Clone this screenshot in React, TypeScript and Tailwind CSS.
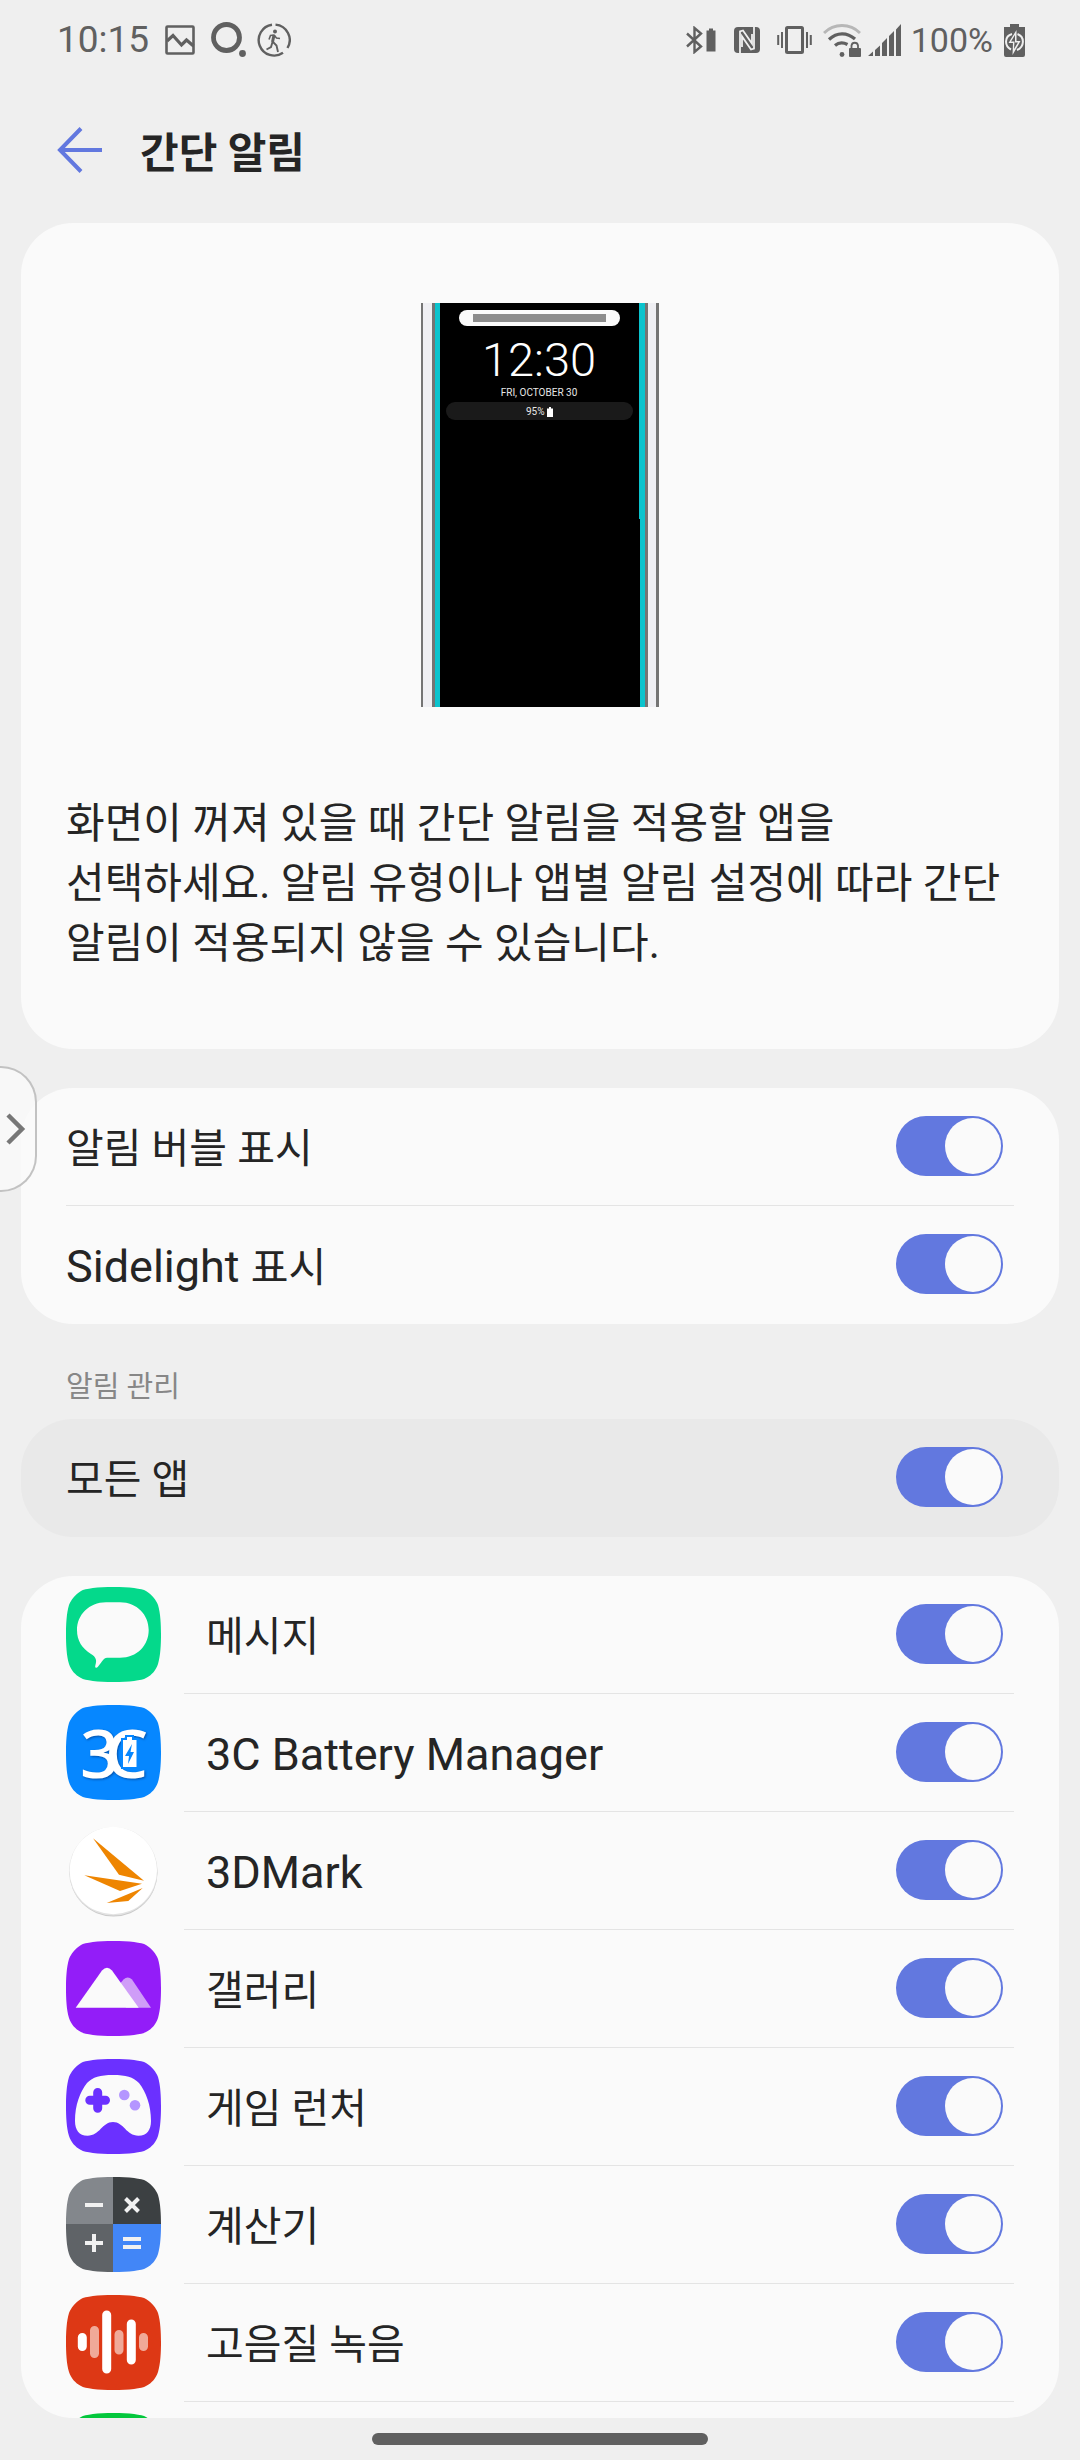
import { useState } from "react";
import type { ReactNode } from "react";

const SQUIRCLE =
  "M47.5 0C63 0 76 1.5 80 4C86 7.5 90 13 92 18C94.5 26 95 38 95 47.5C95 57 94.5 69 92 77C90 83 86 88 80 91C76 93.5 63 95 47.5 95C32 95 19 93.5 15 91C9 88 5 83 3 77C.5 69 0 57 0 47.5C0 38 .5 26 3 18C5 13 9 7.5 15 4C19 1.5 32 0 47.5 0Z";

const AppIcon = ({ color, children }: { color?: string; children?: ReactNode }) => (
  <svg viewBox="0 0 95 95" className="size-[95px] shrink-0" aria-hidden="true">
    {color && <path d={SQUIRCLE} fill={color} />}
    {children}
  </svg>
);

const MessageIcon = () => (
  <AppIcon color="#04d98b">
    <path
      d="M40 15.3H54C71 15.3 82.7 28 82.7 43C82.7 58.5 71 70.7 54 70.7H41C38 70.7 36.5 74 34 77C32 79.5 31 81.5 29.5 80.5C28.5 79.5 30.5 76 30 73C29.5 70 27 68 25 67C16 61 11 54 11 43C11 28 23 15.3 40 15.3Z"
      fill="#fafafa"
    />
  </AppIcon>
);

const BatteryManagerIcon = () => (
  <AppIcon color="#0687ff">
    <text
      x="14 39"
      y="73"
      fontFamily="'Noto Sans', sans-serif"
      fontSize="68"
      fontWeight="500"
      fill="#fff"
      className="drop-shadow-[1px_1px_1px_#0450a8]"
    >
      3C
    </text>
    <path d="M56 34H60V31H67V34H71.5V63H56Z" fill="#fff" stroke="#0687ff" strokeWidth="2" />
    <path d="M66 39L59 51H63L62 59L68 47H64.5Z" fill="#0687ff" />
  </AppIcon>
);

const ThreeDMarkIcon = () => (
  <AppIcon>
    <circle cx="47.5" cy="49.5" r="44" fill="#c9c9c9" />
    <circle cx="47.3" cy="48.3" r="44.3" fill="#e2e2e2" />
    <circle cx="47.3" cy="47.5" r="43.7" fill="#fff" />
    <g fill="#ee8501">
      <path d="M27 15.3L78 57.7L53 51.7Z" />
      <path d="M18.3 52.3L76 60.7L54 68Z" />
      <path d="M76.7 65L62.3 78L40.7 80Z" />
    </g>
  </AppIcon>
);

const GalleryIcon = () => (
  <AppIcon color="#931df8">
    <path d="M52 45L57.5 38.5Q61.7 34.5 66 38.5L85 66.7H60Z" fill="#cf9df8" />
    <path d="M9.7 66.7L36 29.5Q41 24 46 29.5L72.7 66.7Z" fill="#fafafa" />
  </AppIcon>
);

const GameIcon = () => (
  <AppIcon color="#6b30ff">
    <path
      d="M47 16C60 16 67 18 73 24C80 33 85 46 85 62C85 71 81 76.7 72.5 76.7C60 76.7 58 63 47 63C36 63 34 76.7 21.5 76.7C13 76.7 9 71 9 62C9 46 14 33 21 24C27 18 34 16 47 16Z"
      fill="#fafafa"
    />
    <path
      d="M31.7 33.5V49.2M23.8 41.3H39.5"
      stroke="#6b30ff"
      strokeWidth="9"
      strokeLinecap="round"
    />
    <circle cx="58.3" cy="36" r="5.3" fill="#b496ff" />
    <circle cx="69" cy="46.3" r="5.3" fill="#b496ff" />
  </AppIcon>
);

const CalculatorIcon = () => (
  <AppIcon>
    <clipPath id="calc">
      <path d={SQUIRCLE} />
    </clipPath>
    <g clipPath="url(#calc)">
      <rect width="47" height="47" fill="#83878c" />
      <rect x="47" width="48" height="47" fill="#3c4042" />
      <rect y="47" width="47" height="48" fill="#5f6367" />
      <rect x="47" y="47" width="48" height="48" fill="#4286f7" />
    </g>
    <path
      d="M19 28H37M19 66H37M28 57V75M57 62H75M57 70H75M59.5 21.5L72.5 34.5M72.5 21.5L59.5 34.5"
      stroke="#f1f1f1"
      strokeWidth="4"
    />
  </AppIcon>
);

const RecorderIcon = () => (
  <AppIcon color="#dd3815">
    <g strokeWidth="9" strokeLinecap="round">
      <path d="M16.3 42.5V51.5M40.7 20V74M65.3 29V65" stroke="#fff" />
      <path d="M28.5 35.5V58.5M53 39.5V55M77.5 42.5V51.5" stroke="#f0a998" />
    </g>
  </AppIcon>
);

const Latin = ({ children }: { children: ReactNode }) => (
  <span className="text-[45px]">{children}</span>
);

const apps = [
  { id: "messages", name: "메시지", icon: <MessageIcon /> },
  { id: "battery", name: <Latin>3C Battery Manager</Latin>, icon: <BatteryManagerIcon /> },
  { id: "3dmark", name: <Latin>3DMark</Latin>, icon: <ThreeDMarkIcon /> },
  { id: "gallery", name: "갤러리", icon: <GalleryIcon /> },
  { id: "game", name: "게임 런처", icon: <GameIcon /> },
  { id: "calculator", name: "계산기", icon: <CalculatorIcon /> },
  { id: "recorder", name: "고음질 녹음", icon: <RecorderIcon /> },
];

const Switch = ({ id }: { id: string }) => {
  const [on, setOn] = useState(true);
  return (
    <input
      id={id}
      type="checkbox"
      role="switch"
      checked={on}
      onChange={() => setOn(!on)}
      className="mr-[11px] flex h-[60px] w-[107px] shrink-0 cursor-pointer appearance-none rounded-full bg-gray-400 p-[2px] before:size-[56px] before:rounded-full before:bg-[#fafafa] checked:justify-end checked:bg-[#6278df]"
    />
  );
};

const SettingRow = ({ id, label, line }: { id: string; label: ReactNode; line?: boolean }) => (
  <div
    className={`flex h-[118px] items-center justify-between border-b pb-px ${line ? "border-[#e4e4e4]" : "border-transparent"}`}
  >
    <label htmlFor={id} className="pt-[6px]">
      {label}
    </label>
    <Switch id={id} />
  </div>
);

const StatusBar = () => (
  <div className="flex h-20 shrink-0 items-center justify-between pr-[55px] pl-[57px] text-[#606060]">
    <div className="flex items-center">
      <span className="text-[37px] leading-[40px]">10:15</span>
      <svg viewBox="0 0 30 30" className="ml-4 size-[30px]" fill="none" stroke="currentColor">
        <rect x="1.5" y="1.5" width="27" height="27" rx="1" strokeWidth="2.6" />
        <path d="M2 16L8 10.5L16.5 20L21.500 15L28.500 21" strokeWidth="3.2" />
      </svg>
      <svg viewBox="0 0 36 36" className="ml-4 size-[36px]" fill="none">
        <circle cx="15.5" cy="15.5" r="13" stroke="currentColor" strokeWidth="4.8" />
        <circle cx="31.5" cy="31.5" r="3.4" fill="currentColor" />
      </svg>
      <svg viewBox="0 0 34 34" className="ml-[10px] size-[34px]" fill="none" stroke="currentColor">
        <path
          d="M18.5 1.600A15.500 15.500 0 0 1 30.500 25M26 29.800A15.500 15.500 0 1 1 15 1.700"
          strokeWidth="2.4"
        />
        <circle cx="18" cy="8.5" r="2" fill="currentColor" stroke="none" />
        <path d="M12 16.5L13.5 12.5L17 12L19.5 15L23 15.5" strokeWidth="1.6" />
        <path d="M17 12L15.5 19" strokeWidth="3" />
        <path d="M15.5 18.5L19.5 22.5L21 29M15.5 19L14 24L9.5 26.5" strokeWidth="1.9" />
      </svg>
    </div>

    <div className="flex items-center">
      <svg viewBox="0 0 30 28" className="h-[28px] w-[30px]" fill="none">
        <path
          d="M1 7.5L15 20.5L8.5 26V2L15 7.5L1 20.5"
          stroke="currentColor"
          strokeWidth="2.4"
        />
        <path d="M20.5 4.5H23V2.5H27V4.5H29.5V25.5H20.5Z" fill="currentColor" />
      </svg>
      <svg viewBox="0 0 26 26" className="ml-[18px] size-[26px]">
        <rect width="26" height="26" rx="4" fill="currentColor" />
        <path
          d="M6 26V4.5L9 3.5L18 16.5V7M20 0V21.5L17 22.5L8 9.5V20"
          fill="none"
          stroke="#efefef"
          strokeWidth="1.8"
        />
      </svg>
      <svg viewBox="0 0 35 30" className="ml-[17px] h-[30px] w-[35px]" fill="none" stroke="currentColor">
        <rect x="9.5" y="2.5" width="16" height="25" rx="1" strokeWidth="3" />
        <path d="M1.2 10V20M5 7V23M33.8 10V20M30 7V23" strokeWidth="2" />
      </svg>
      <svg viewBox="0 0 38 33" className="ml-[11px] h-[33px] w-[38px]" fill="none">
        <path d="M1 9C11 -1 27 -1 37 9" stroke="#b7b7b7" strokeWidth="3" />
        <path d="M6 15.5C14 8 24 8 32 15" stroke="currentColor" strokeWidth="3.2" />
        <path d="M12 21.5C16 18 20 18 24.5 20.5" stroke="currentColor" strokeWidth="3.2" />
        <circle cx="19" cy="30.5" r="2.4" fill="currentColor" />
        <rect x="26" y="24" width="12" height="9" rx="1" fill="currentColor" />
        <path d="M28.5 25V21.5A3.3 3.3 0 0 1 35 21.5V25" stroke="currentColor" strokeWidth="1.8" />
      </svg>
      <svg viewBox="0 0 33 32" className="ml-[7px] h-[32px] w-[33px]" fill="currentColor">
        <path d="M0 32L5 27.5V32ZM7 26L12 21.5V32H7ZM14 19L19 14V32H14ZM21 12L26 7V32H21ZM28 5.5L33 0V32H28Z" />
      </svg>
      <span className="ml-[10px] text-[34px] leading-[40px]">100%</span>
      <svg viewBox="0 0 21 33" className="ml-[11px] h-[33px] w-[21px]">
        <path d="M0 3H6V0H15V3H21V31Q21 33 19 33H2Q0 33 0 31Z" fill="currentColor" />
        <path d="M8 10C.5 12 0 22 7 25.5M13.5 10C21 13 20.5 23 13 26" fill="none" stroke="#efefef" strokeWidth="2" />
        <path d="M12.5 6L4.5 19H9L8.5 31L16.5 17H12.5Z" fill="#efefef" />
        <path d="M11 11L7 17.5H10.5L10 25L14 18.5H11Z" fill="currentColor" />
      </svg>
    </div>
  </div>
);

const PhonePreview = () => (
  <svg viewBox="0 0 238 404" className="mx-auto h-[404px] w-[238px]" fontFamily="Roboto, sans-serif">
    <rect width="238" height="404" fill="#efeff3" />
    <path d="M0 0H2V404H0ZM11 0H14V404H11ZM224 0H227V404H224ZM235 0H238V404H235Z" fill="#747474" />
    <rect x="14" width="210" height="404" fill="#0bc3cd" />
    <path d="M19 0H218V216H219V404H19Z" fill="#000" />
    <rect x="38" y="7" width="161" height="16" rx="8" fill="#fafafa" />
    <rect x="52" y="11" width="133" height="8" fill="#8c8c8c" />
    <text x="118" y="73" textAnchor="middle" fontSize="47" fontWeight="300" fill="#fff">
      12:30
    </text>
    <text x="118" y="93" textAnchor="middle" fontSize="10" fill="#e6e6e6">
      FRI, OCTOBER 30
    </text>
    <rect x="25" y="99" width="187" height="18" rx="9" fill="#1a1a1a" />
    <text x="105" y="112" fontSize="10" fill="#e6e6e6">
      95%
    </text>
    <path d="M126 105.500H128V104H130V105.500H132V114H126Z" fill="#fff" />
  </svg>
);

const App = () => {
  return (
    <div className="flex h-screen flex-col overflow-hidden bg-[#efefef] font-[Roboto,'Noto_Sans_CJK_KR',sans-serif] text-[41px] leading-[60px] text-[#252525]">
      <StatusBar />

      <header className="mb-1 flex h-[139px] shrink-0 items-center gap-[37px] pl-[57px]">
        <button type="button" aria-label="뒤로">
          <svg viewBox="0 0 46 46" className="size-[46px]" fill="none" stroke="#6278df" strokeWidth="4">
            <path d="M24 1.5L3 23L24 44.5M3 23H45" />
          </svg>
        </button>
        <h1 className="pt-2 text-[42px] font-bold">간단 알림</h1>
      </header>

      <main className="flex min-h-0 flex-1 flex-col px-[21px]">
        <section className="shrink-0 rounded-[52px] bg-[#fafafa] px-[45px] pt-20 pb-[75px]">
          <PhonePreview />
          <p className="mt-[87px] text-[42px] break-keep">
            화면이 꺼져 있을 때 간단 알림을 적용할 앱을 선택하세요. 알림 유형이나 앱별 알림 설정에
            따라 간단 알림이 적용되지 않을 수 있습니다.
          </p>
        </section>

        <section className="relative mt-[39px] shrink-0 rounded-[52px] bg-[#fafafa] px-[45px]">
          <SettingRow id="bubble" label="알림 버블 표시" line />
          <SettingRow
            id="sidelight"
            label={
              <>
                <Latin>Sidelight </Latin>표시
              </>
            }
          />
          <button
            type="button"
            aria-label="패널 열기"
            className="absolute -top-[22px] -left-[21px] flex h-[126px] w-[37px] items-center rounded-r-[36px] border-2 border-l-0 border-[#c2c2c2] bg-[#fafafa]/80 pl-[6px]"
          >
            <svg viewBox="0 0 20 32" className="h-[32px] w-[20px]" fill="none" stroke="#777" strokeWidth="4.5">
              <path d="M2 2L16 16L2 30" />
            </svg>
          </button>
        </section>

        <h2 className="mt-[39px] shrink-0 pl-[45px] text-[29px] leading-[48px] text-[#878787]">
          알림 관리
        </h2>
        <section className="mt-2 shrink-0 rounded-[52px] bg-[#e9e9e9] px-[45px]">
          <SettingRow id="all-apps" label="모든 앱" />
        </section>

        <ul className="mt-[39px] min-h-0 flex-1 overflow-hidden rounded-[52px] bg-[#fafafa] px-[45px]">
          {apps.map((app) => (
            <li key={app.id} className="flex gap-[23px]">
              <div className="pt-[11px]">{app.icon}</div>
              <div className="flex-1 border-b border-[#e4e4e4] pl-[22px]">
                <div className="-mb-px">
                  <SettingRow id={app.id} label={app.name} />
                </div>
              </div>
            </li>
          ))}
          <li className="pt-[11px]">
            <AppIcon color="#03c73c" />
          </li>
        </ul>
      </main>

      <footer className="flex h-[42px] shrink-0 items-center justify-center">
        <div className="h-3 w-[336px] rounded-full bg-[#606060]"></div>
      </footer>
    </div>
  );
};

export default App;
